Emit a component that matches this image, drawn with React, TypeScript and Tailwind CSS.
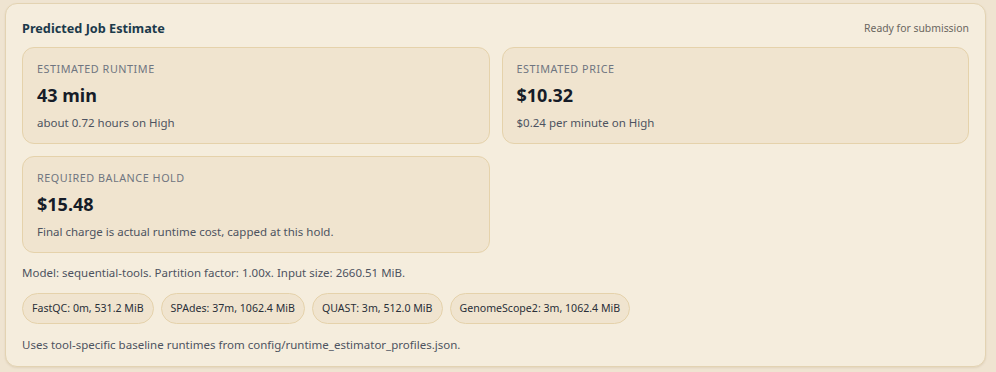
const cards = [
  { label: "Estimated runtime", value: "43 min", note: "about 0.72 hours on High" },
  { label: "Estimated price", value: "$10.32", note: "$0.24 per minute on High" },
  { label: "Required balance hold", value: "$15.48", note: "Final charge is actual runtime cost, capped at this hold." },
]

const tools = [
  "FastQC: 0m, 531.2 MiB",
  "SPAdes: 37m, 1062.4 MiB",
  "QUAST: 3m, 512.0 MiB",
  "GenomeScope2: 3m, 1062.4 MiB",
]

export default function App() {
  return (
    <div
      className="min-h-screen bg-[#efe4d1] pl-[5px] pt-[3px]"
      style={{ fontFamily: '"Noto Sans", "Open Sans", sans-serif' }}
    >
      <section className="w-[981px] h-[364px] rounded-xl border border-[#e3d3b2] bg-[#f5eddd] px-4 pt-[15px] shadow-[0_1px_2px_rgba(120,90,40,0.12)]">
        {/* HEADER */}
        <div className="flex items-center justify-between h-5">
          <h2 className="text-[12.7px] font-bold text-[#1c3a4b]">Predicted Job Estimate</h2>
          <span className="text-[10.4px] text-[#6a6660]">Ready for submission</span>
        </div>

        {/* CARDS */}
        <div className="mt-[8px] grid grid-cols-2 gap-3">
          {cards.map((c) => (
            <div
              key={c.label}
              className="h-[97px] rounded-xl border border-[#e5d2ab] bg-[#f0e4cf] px-[14px] pt-[13px]"
            >
              <div className="text-[10.8px] leading-4 uppercase tracking-[0.05em] text-[#6f7580]">
                {c.label}
              </div>
              <div className="mt-[6px] text-[18px] leading-6 font-bold text-[#161c28]">{c.value}</div>
              <div className="mt-[8px] text-[11.5px] leading-4 text-[#4d5360]">{c.note}</div>
            </div>
          ))}
        </div>

        <p className="mt-3 text-[11.5px] leading-4 text-[#4d5360]">
          Model: sequential-tools. Partition factor: 1.00x. Input size: 2660.51 MiB.
        </p>

        {/* TOOL PILLS */}
        <div className="mt-3 flex gap-[7px]">
          {tools.map((t) => (
            <span
              key={t}
              className="flex h-[31px] items-center rounded-full border border-[#e5d2ab] bg-[#f0e4cf] px-[9px] text-[10.6px] text-[#2a2f38]"
            >
              {t}
            </span>
          ))}
        </div>

        <p className="mt-[13px] text-[11.5px] leading-4 text-[#4d5360]">
          Uses tool-specific baseline runtimes from config/runtime_estimator_profiles.json.
        </p>
      </section>
    </div>
  )
}
